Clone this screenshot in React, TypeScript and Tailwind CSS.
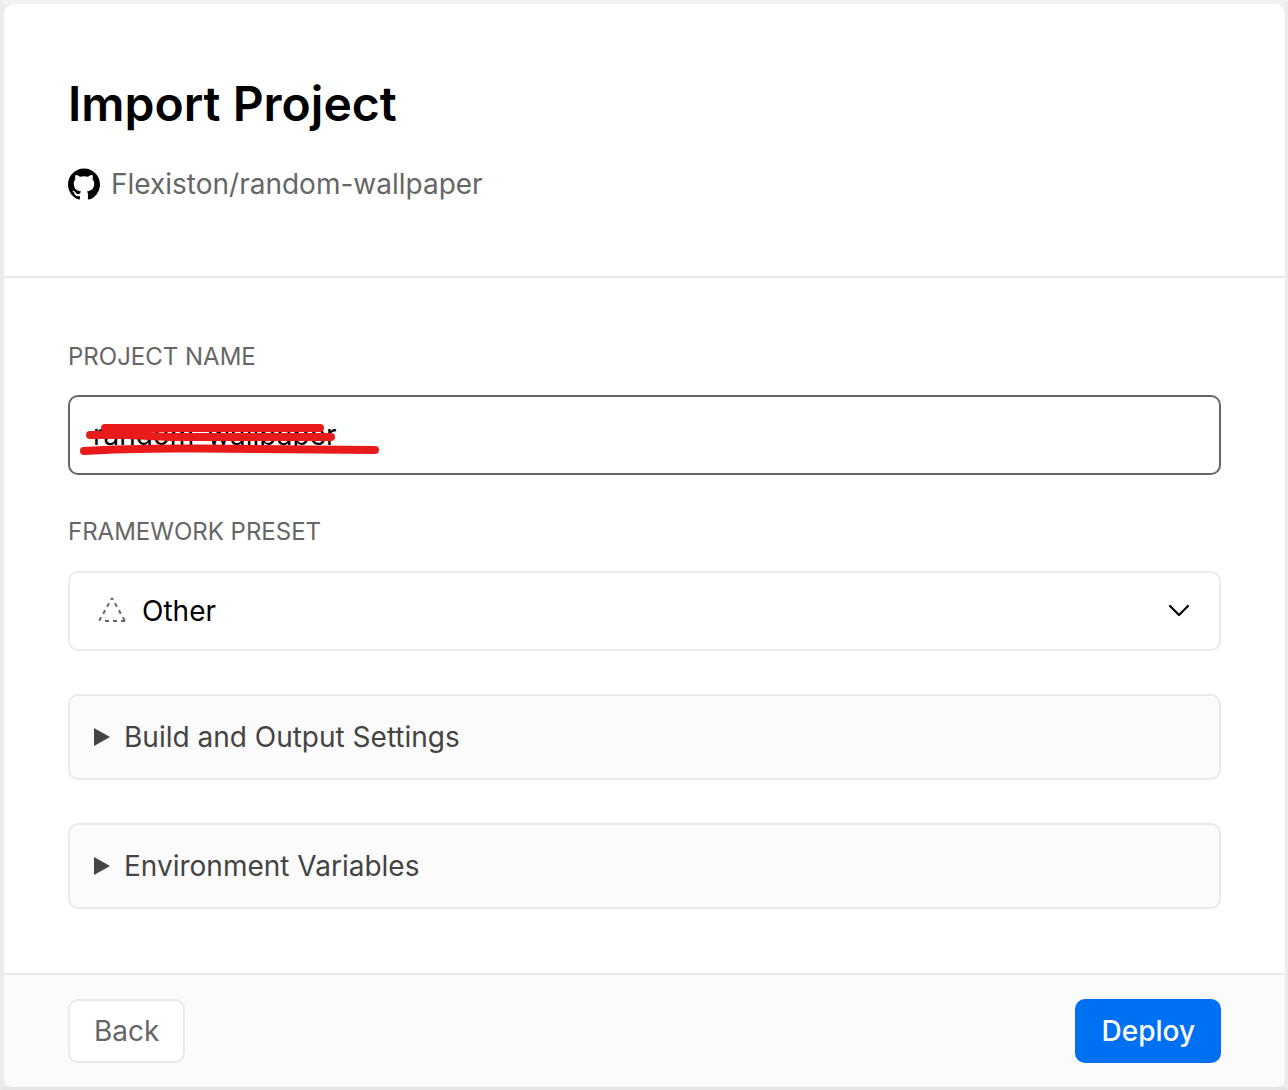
import React from "react";

function GitHubMark() {
  return (
    <svg viewBox="0 0 24 24" className="h-8 w-8 shrink-0" fill="#000" aria-hidden="true">
      <path d="M12 .297c-6.63 0-12 5.373-12 12 0 5.303 3.438 9.8 8.205 11.385.6.113.82-.258.82-.577 0-.285-.01-1.04-.015-2.04-3.338.724-4.042-1.61-4.042-1.61C4.422 18.07 3.633 17.7 3.633 17.7c-1.087-.744.084-.729.084-.729 1.205.084 1.838 1.236 1.838 1.236 1.07 1.835 2.809 1.305 3.495.998.108-.776.417-1.305.76-1.605-2.665-.3-5.466-1.332-5.466-5.93 0-1.31.465-2.38 1.235-3.22-.135-.303-.54-1.523.105-3.176 0 0 1.005-.322 3.3 1.23.96-.267 1.98-.399 3-.405 1.02.006 2.04.138 3 .405 2.28-1.552 3.285-1.23 3.285-1.23.645 1.653.24 2.873.12 3.176.765.84 1.23 1.91 1.23 3.22 0 4.61-2.805 5.625-5.475 5.92.42.36.81 1.096.81 2.22 0 1.606-.015 2.896-.015 3.286 0 .315.21.69.825.57C20.565 22.092 24 17.592 24 12.297c0-6.627-5.373-12-12-12" />
    </svg>
  );
}

function Disclosure({ title }: { title: string }) {
  return (
    <button type="button" aria-expanded="false" className="flex h-[86px] w-full items-center gap-3.5 rounded-[10px] border-2 border-[#eaeaea] bg-[#fbfbfb] px-6 text-left text-[28px] leading-10 text-[#444]">
      <svg viewBox="0 0 16 18" className="h-[18px] w-4" fill="#444" aria-hidden="true">
        <path d="M0 0 16 9 0 18z" />
      </svg>
      <span>{title}</span>
    </button>
  );
}

export default function App() {
  return (
    <div className="border-4 border-r-[3px] border-b-[3px] border-x-[#ebebeb] border-t-[#f2f2f2] border-b-[#e5e5e5] bg-[#efefef] font-['Inter',sans-serif]">
      <main className="overflow-hidden rounded-[10px] bg-white">
        <header className="border-b-2 border-[#eaeaea] px-16 pt-[68px] pb-[72px]">
          <h1 className="text-[48px] leading-16 font-semibold text-black">Import Project</h1>
          <div className="mt-7 flex items-center gap-[11px] text-[28px] leading-10 text-[#666]">
            <GitHubMark />
            <span>Flexiston/random-wallpaper</span>
          </div>
        </header>
        <form id="import" className="px-16 pt-[63px] pb-16" onSubmit={(e) => e.preventDefault()}>
          <label htmlFor="name" className="block text-2xl leading-8 text-[#666]">PROJECT NAME</label>
          <div className="relative mt-[22px]">
            <input id="name" defaultValue="random-wallpaper" className="block h-20 w-full rounded-[10px] border-2 border-[#666] bg-white px-[23px] text-[28px] text-black outline-none" />
            <svg viewBox="0 0 320 80" className="pointer-events-none absolute top-0 left-0 h-20 w-80" fill="none" stroke="#e81a1a" strokeWidth="8" strokeLinecap="round" strokeLinejoin="round" aria-hidden="true">
              <path d="M37 33H252M22 40H60L102 42H263M16 56Q60 53 130 53.5T307 55" />
            </svg>
          </div>
          <label htmlFor="preset" className="mt-[41px] block text-2xl leading-8 text-[#666]">FRAMEWORK PRESET</label>
          <div className="relative mt-[23px]">
            <select id="preset" className="block h-20 w-full appearance-none rounded-[10px] border-2 border-[#eaeaea] bg-white pl-[72px] text-[28px] text-black outline-none">
              <option>Other</option>
            </select>
            <svg viewBox="0 0 28 26" className="pointer-events-none absolute top-[26px] left-[30px] h-[26px] w-7" fill="none" stroke="#666" strokeWidth="2" strokeDasharray="4 4" aria-hidden="true">
              <path d="M14 1 27 24" strokeDashoffset="2" />
              <path d="M14 1 1 24" strokeDashoffset="2" />
              <path d="M7 24H27" />
            </svg>
            <svg viewBox="0 0 24 14" className="pointer-events-none absolute top-[33px] right-[30px] h-3.5 w-6" fill="none" stroke="#000" strokeWidth="2.2" strokeLinecap="round" strokeLinejoin="round" aria-hidden="true">
              <path d="m3 2 9 9 9-9" />
            </svg>
          </div>
          <div className="mt-[43px] flex flex-col gap-[43px]">
            <Disclosure title="Build and Output Settings" />
            <Disclosure title="Environment Variables" />
          </div>
        </form>
        <footer className="flex items-center justify-between border-t-2 border-[#eaeaea] bg-[#fbfbfb] px-16 py-6">
          <button type="button" className="h-16 rounded-[10px] border-2 border-[#eaeaea] bg-white px-6 text-[28px] text-[#666]">Back</button>
          <button type="submit" form="import" className="h-16 rounded-[10px] bg-[#0070f3] px-[26px] text-[28px] font-medium text-white">Deploy</button>
        </footer>
      </main>
    </div>
  );
}
